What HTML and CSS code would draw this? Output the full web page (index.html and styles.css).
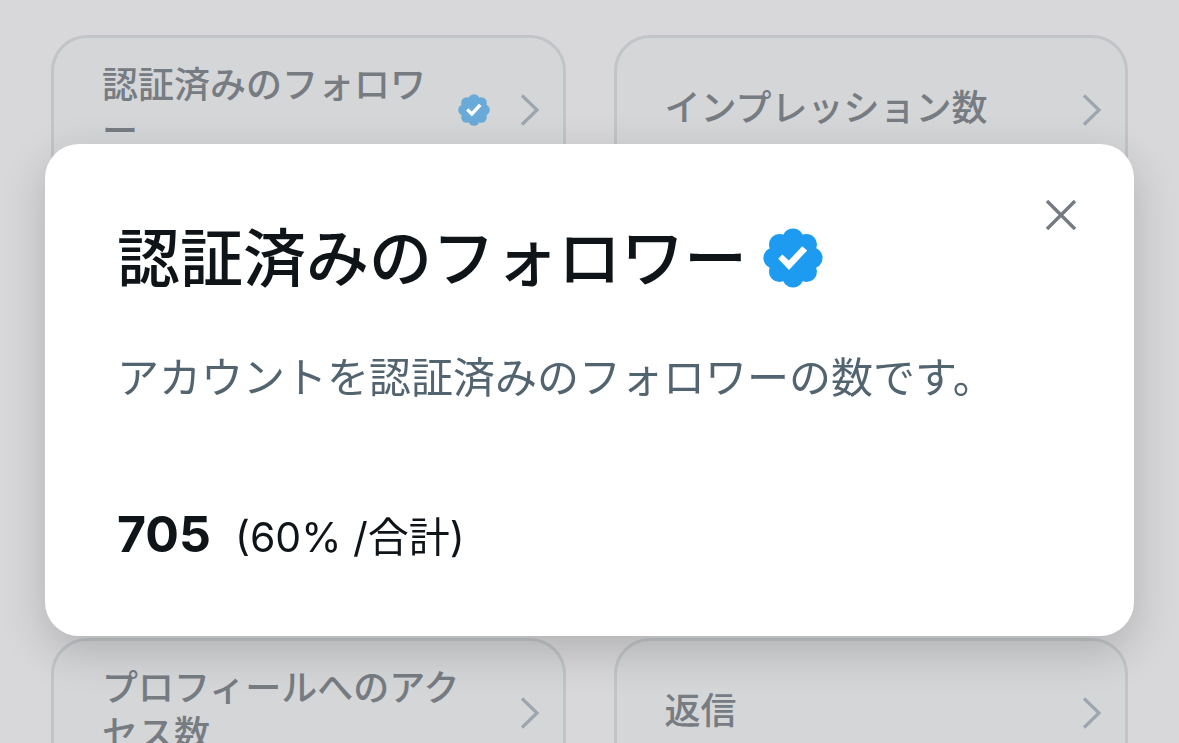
FILE: index.html
```html
<!DOCTYPE html>
<html lang="ja">
<head>
    <meta charset="UTF-8">
    <meta name="viewport" content="width=device-width, initial-scale=1.0">
    <title>認証済みのフォロワー</title>
    <link rel="stylesheet" href="styles.css">
</head>
<body>
    <!-- Shared icons -->
    <svg class="icon-defs" aria-hidden="true">
        <symbol id="verified" viewBox="0 0 60 60">
            <g fill="currentColor">
                <circle cx="30" cy="30" r="22"/>
                <circle cx="30" cy="11" r="10.6"/>
                <circle cx="43.4" cy="16.6" r="10.6"/>
                <circle cx="49" cy="30" r="10.6"/>
                <circle cx="43.4" cy="43.4" r="10.6"/>
                <circle cx="30" cy="49" r="10.6"/>
                <circle cx="16.6" cy="43.4" r="10.6"/>
                <circle cx="11" cy="30" r="10.6"/>
                <circle cx="16.6" cy="16.6" r="10.6"/>
            </g>
            <path class="check" d="M15.2 30.8l4.2-4.2 6.4 6L39.2 18.2l5 4.2L26 42z"/>
        </symbol>
        <symbol id="chevron" viewBox="0 0 20 32">
            <path d="M2 1.5L17 16 2 30.5" fill="none" stroke="currentColor" stroke-width="3.2"/>
        </symbol>
    </svg>

    <main class="cards">
        <section class="card">
            <a class="card-head" href="#">
                <span class="card-title">認証済みのフォロワー</span>
                <svg class="card-badge"><use href="#verified"/></svg>
                <svg class="chevron"><use href="#chevron"/></svg>
            </a>
        </section>
        <section class="card">
            <a class="card-head" href="#">
                <span class="card-title">インプレッション数</span>
                <svg class="chevron"><use href="#chevron"/></svg>
            </a>
        </section>
        <section class="card">
            <a class="card-head" href="#">
                <span class="card-title">プロフィールへのアクセス数</span>
                <svg class="chevron"><use href="#chevron"/></svg>
            </a>
        </section>
        <section class="card">
            <a class="card-head" href="#">
                <span class="card-title">返信</span>
                <svg class="chevron"><use href="#chevron"/></svg>
            </a>
        </section>
    </main>

    <div class="overlay">
        <div class="modal" role="dialog" aria-labelledby="modal-title">
            <button class="close" type="button" aria-label="閉じる">
                <svg viewBox="0 0 32 32"><path d="M2 2l28 28M30 2L2 30" fill="none" stroke="currentColor" stroke-width="3.4"/></svg>
            </button>
            <h1 id="modal-title">
                認証済みのフォロワー
                <svg class="title-badge"><use href="#verified"/></svg>
            </h1>
            <p class="description">アカウントを認証済みのフォロワーの数です。</p>
            <p class="stat"><strong>705</strong><span>(60% /合計)</span></p>
        </div>
    </div>
</body>
</html>
```

FILE: styles.css
```css
* {
    box-sizing: border-box;
}

body {
    margin: 0;
    height: 100vh;
    overflow: hidden;
    background: #d8d8da;
    color: #0f1419;
    font-family: Inter, "Noto Sans CJK JP", sans-serif;
}

.icon-defs {
    position: absolute;
    width: 0;
    height: 0;
}

/* Cards behind the dialog */
.cards {
    display: grid;
    grid-template-columns: 1fr 1fr;
    gap: 48px;
    padding: 35px 51px;
}

.card {
    min-height: 555px;
    border: 3px solid #c1c5c7;
    border-radius: 36px;
    background: #d4d6d8;
}

.card-head {
    display: flex;
    align-items: center;
    gap: 30px;
    min-height: 144px;
    padding: 0 23px 0 48px;
    color: #777c83;
    text-decoration: none;
}

.card-title {
    flex: 1;
    padding-bottom: 4px;
    font-size: 36px;
    font-weight: 500;
    line-height: 46px;
    line-break: anywhere;
}

.card-badge {
    flex: none;
    width: 32px;
    height: 32px;
    color: #6aaad8;
}

.card-badge,
.chevron {
    display: block;
}

.chevron {
    flex: none;
    width: 20px;
    height: 32px;
    color: #9da6b0;
}

.check {
    fill: #fff;
}

/* Dialog */
.overlay {
    position: fixed;
    inset: 0;
    padding: 144px 45px;
}

.modal {
    position: relative;
    padding: 72px 72px 69px;
    border-radius: 34px;
    background: #fff;
    box-shadow: 0 15px 45px rgba(0, 0, 0, 0.18);
}

.close {
    position: absolute;
    top: 55px;
    right: 57px;
    width: 32px;
    height: 32px;
    padding: 0;
    border: none;
    background: none;
    color: #767b83;
    cursor: pointer;
}

.close svg {
    display: block;
}

h1 {
    display: flex;
    align-items: center;
    gap: 16px;
    margin: 0 0 48px;
    font-size: 63px;
    font-weight: 500;
    line-height: 84px;
}

.title-badge {
    width: 60px;
    height: 60px;
    color: #1d9bf0;
}

.description {
    margin: 0 0 96px;
    color: #536471;
    font-size: 42px;
    line-height: 60px;
}

.stat {
    display: flex;
    align-items: baseline;
    gap: 24px;
    margin: 0;
    line-height: 60px;
}

.stat strong {
    font-size: 50px;
    font-weight: 700;
}

.stat span {
    font-size: 41px;
}
```
